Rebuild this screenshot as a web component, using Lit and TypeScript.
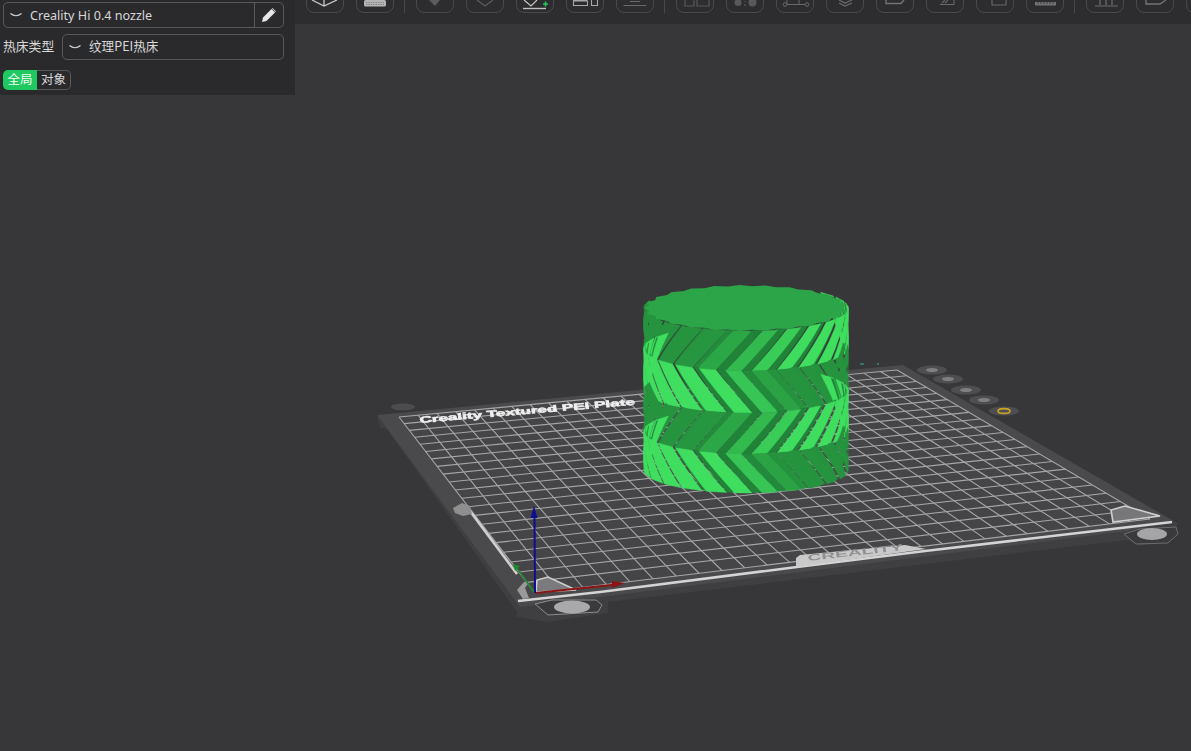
import { LitElement, css, html, svg } from 'lit';
import { customElement } from 'lit/decorators.js';

type Pt = [number, number];

const pts = (list: Pt[]) => list.map((p) => `${p[0].toFixed(1)},${p[1].toFixed(1)}`).join(' ');

// Сетка стола: перспектива из единичного квадрата в четыре угла
const corners: Pt[] = [
  [399, 417],
  [897, 370],
  [1150, 519],
  [535, 593],
];

function homography([a, b, c, d]: Pt[]) {
  const dx1 = b[0] - c[0];
  const dx2 = d[0] - c[0];
  const sx = a[0] - b[0] + c[0] - d[0];
  const dy1 = b[1] - c[1];
  const dy2 = d[1] - c[1];
  const sy = a[1] - b[1] + c[1] - d[1];
  const den = dx1 * dy2 - dx2 * dy1;
  const g = (sx * dy2 - dx2 * sy) / den;
  const h = (dx1 * sy - sx * dy1) / den;
  return (u: number, v: number): Pt => {
    const w = g * u + h * v + 1;
    return [
      ((b[0] - a[0] + g * b[0]) * u + (d[0] - a[0] + h * d[0]) * v + a[0]) / w,
      ((b[1] - a[1] + g * b[1]) * u + (d[1] - a[1] + h * d[1]) * v + a[1]) / w,
    ];
  };
}

const bedMap = homography(corners);
const COLS = 28;
const ROWS = 21;

function gridLines() {
  const out = [];
  for (let i = 0; i <= COLS; i++) {
    const p = bedMap(i / COLS, 0);
    const q = bedMap(i / COLS, 1);
    out.push(svg`<line class="grid" x1=${p[0]} y1=${p[1]} x2=${q[0]} y2=${q[1]}></line>`);
  }
  for (let i = 0; i <= ROWS; i++) {
    const p = bedMap(0, i / ROWS);
    const q = bedMap(1, i / ROWS);
    out.push(svg`<line class="grid" x1=${p[0]} y1=${p[1]} x2=${q[0]} y2=${q[1]}></line>`);
  }
  return out;
}

// Цилиндр: четыре полосы косых зубьев, стыкуются ёлочкой
const CX = 746;
const R = 102.5;
const RY = 23;
const TEETH = 25;
const TWIST = 0.36;
const SEGMENTS = 4;
const LEVELS = [308, 348, 390, 431, 470];

function shade(t: number) {
  const mix = (a: number, b: number) => Math.round(a + (b - a) * Math.min(1, Math.max(0, t)));
  return `rgb(${mix(30, 63)},${mix(125, 222)},${mix(53, 95)})`;
}

const ramp = (x: number, a: number, b: number) => Math.min(1, Math.max(0, (x - a) / (b - a)));

function bandFacets(band: number) {
  const top = LEVELS[band];
  const bottom = LEVELS[band + 1];
  const rising = band % 2 === 0;
  const twist = rising ? TWIST : -TWIST;
  const offset = rising ? 0 : TWIST;
  const step = (Math.PI * 2) / TEETH;
  const facets: { z: number; points: Pt[]; fill: string }[] = [];
  const at = (a: number, r: number, y: number): Pt => [CX + r * Math.cos(a), y + (RY * Math.sin(a) * r) / R];

  for (let i = 0; i < TEETH; i++) {
    const a0 = i * step + offset;
    const t = (Math.cos(a0 + step / 2 + twist / 2) + 1) / 2;
    // ширина канавки и яркость зависят от стороны цилиндра
    const groove = rising
      ? 0.14 + 0.26 * ramp(t, 0.3, 0.5) - 0.2 * ramp(t, 0.78, 0.95)
      : 0.1 + 0.28 * ramp(t, 0.2, 0.45);
    const landLevel = rising ? 0.24 + 0.76 * ramp(t, 0.25, 0.75) : 0.24 + 0.76 * (1 - ramp(t, 0.42, 0.68));
    const grooveLevel = rising ? 0.2 - 0.14 * ramp(t, 0.3, 0.5) : 0.06 + 0.16 * ramp(t, 0.55, 0.72);
    const split = a0 + step * (1 - groove);
    const parts: [number, number, number, number][] = [
      [a0, split, R, landLevel],
      [split, a0 + step, R - 2.5, grooveLevel],
    ];
    for (const [from, to, r, level] of parts) {
      const mid = (from + to) / 2;
      if (Math.sin(mid) < -0.3 && Math.sin(mid + twist) < -0.3) continue;
      const points: Pt[] = [];
      for (let k = 0; k <= SEGMENTS; k++) {
        const f = k / SEGMENTS;
        points.push(at(to + twist * f, r, top + (bottom - top) * f));
      }
      for (let k = SEGMENTS; k >= 0; k--) {
        const f = k / SEGMENTS;
        points.push(at(from + twist * f, r, top + (bottom - top) * f));
      }
      facets.push({ z: Math.sin(mid + twist / 2), fill: shade(level), points });
    }
  }
  return facets.sort((a, b) => a.z - b.z);
}

function cylinder() {
  const out = [];
  for (let band = 0; band < 4; band++) {
    for (const f of bandFacets(band)) {
      out.push(svg`<polygon points=${pts(f.points)} fill=${f.fill} stroke=${f.fill} stroke-width="0.4"></polygon>`);
    }
  }
  const cap: Pt[] = [];
  for (let i = 0; i < 50; i++) {
    const a = (i / 50) * Math.PI * 2;
    const r = i % 2 ? R : R - 5;
    cap.push([CX + r * Math.cos(a), LEVELS[0] + (RY * Math.sin(a) * r) / R]);
  }
  out.push(svg`<polygon points=${pts(cap)} fill="#2ca549"></polygon>`);
  return out;
}

const plateDots: Pt[] = [
  [932, 370],
  [948, 379],
  [966, 390],
  [984, 400],
];

const scene = svg`
  <polygon fill="#3f3f41" points="380,428 377,415 517,612 517,617 547,622 608,613 608,602 1127,540 1140,546 1172,540 1178,523 1172,520"></polygon>
  <polygon fill="#4a4a4c" points="377,415 903,365 1172,520 1128,531 608,596 520,607"></polygon>
  <polygon fill="#454548" points=${pts(corners)}></polygon>
  ${gridLines()}

  <ellipse cx="403" cy="407" rx="12" ry="3.5" fill="#4c4c4e"></ellipse>
  ${plateDots.map(
    (p) => svg`
      <ellipse cx=${p[0]} cy=${p[1]} rx="15" ry="4.5" fill="#4e4e50"></ellipse>
      <ellipse cx=${p[0]} cy=${p[1]} rx="6" ry="2" fill="#7f7f81"></ellipse>
    `,
  )}
  <ellipse cx="1004" cy="411" rx="15" ry="4.5" fill="#4e4e50"></ellipse>
  <ellipse cx="1004" cy="411" rx="6" ry="2.4" fill="none" stroke="#c7a428" stroke-width="1.6"></ellipse>
  <path d="M860 364h4M877 364h2" stroke="#2fb39a" stroke-width="1"></path>

  <text
    class="plate-name"
    transform="matrix(0.996 -0.085 0.1 0.75 420 423)"
    textLength="216"
    lengthAdjust="spacingAndGlyphs"
  >Creality Textured PEI Plate</text>

  <path d="M518 601 L600 592 L797 567 L925 551 L1172 522" stroke="#d4d4d4" stroke-width="2.6" fill="none"></path>
  <path d="M470 511 L517 574" stroke="#cfcfcf" stroke-width="2.6" fill="none"></path>
  <path d="M453 508l9-5 8 3 2 8-9 2-8-3z" fill="#8f8f8f"></path>
  <polygon fill="#c9c9c9" points="796,558 800,555 905,545 926,549 796,567"></polygon>
  <text class="plate-brand" transform="matrix(0.993 -0.115 0.12 0.8 808 561)" textLength="96" lengthAdjust="spacingAndGlyphs">CREALITY</text>

  <path d="M536 592 L537 580 L548 577 L576 590 Z" fill="#7b7b7d" stroke="#cfcfcf" stroke-width="1.6"></path>
  <path d="M517 590 l7-8 5 0 -4 6 4 10 -6 1z" fill="#9a9a9a"></path>
  <path d="M535 604 L552 600 L596 600 L602 605 L598 612 L548 615z" fill="#3a3a3c" stroke="#8d8d8d" stroke-width="1"></path>
  <ellipse cx="572" cy="607" rx="18" ry="6.5" fill="#a9a9ab"></ellipse>

  <path d="M1111 510 L1113 522 L1160 516 L1125 506 Z" fill="#77777a" stroke="#cfcfcf" stroke-width="1.6"></path>
  <path d="M1124 534 L1140 529 L1176 527 L1178 534 L1168 543 L1136 544z" fill="#3a3a3c" stroke="#6d6d6f" stroke-width="1"></path>
  <ellipse cx="1152" cy="534" rx="15" ry="6" fill="#a5a5a7"></ellipse>

  <line x1="535" y1="593" x2="516" y2="567" stroke="#1e8a2e" stroke-width="1.6"></line>
  <polygon points="513,564 520,566 515,571" fill="#1e8a2e"></polygon>
  <line x1="535" y1="593" x2="612" y2="585" stroke="#8c1414" stroke-width="1.8"></line>
  <polygon points="625,583 612,581 612,588" fill="#8c1414"></polygon>
  <line x1="535" y1="593" x2="534.5" y2="516" stroke="#0e0e8e" stroke-width="2"></line>
  <polygon points="534,506 530.5,518 537.5,518" fill="#0e0e8e"></polygon>

  ${cylinder()}
`;

// Значки панели: сверху срезаны краем окна
const icons = [
  svg`<path d="M6 0l12 6L31 0M18 0v6" stroke="#c8c8c8" fill="none" stroke-width="1.3"></path>`,
  svg`<rect x="8" y="0" width="22" height="6.5" rx="1.5" fill="#b5b5b5"></rect><path d="M10 2.5h18M10 4.500h18" stroke="#77777a" stroke-width=".8" stroke-dasharray="1.4 1"></path>`,
  svg`<path d="M13 0h11l-5 6z" fill="#5c5c5e"></path>`,
  svg`<path d="M11 0l8 6 8-6" stroke="#5c5c5e" fill="none" stroke-width="1.3"></path>`,
  svg`<path d="M8 0l7 6 6-6" stroke="#c8c8c8" fill="none" stroke-width="1.2"></path><path d="M7 8.5h23" stroke="#bdbdbd" stroke-width="1.4"></path><path d="M27 4h5M29.5 1.5v5" stroke="#22c55e" stroke-width="1.6"></path>`,
  svg`<path d="M7.5 1h14v4.5h-14zM7 .5h14M25.5 0v5.5h6V0" stroke="#a8a8a8" fill="none" stroke-width="1.1"></path>`,
  svg`<path d="M7.5 5.5h23M14 1.5h10" stroke="#6a6a6c" fill="none" stroke-width="1.1"></path>`,
  svg`<path d="M9 0v6h9V0M21 0v6h12V0" stroke="#59595b" fill="none" stroke-width="1.2"></path>`,
  svg`<circle cx="12" cy="2.5" r="3.5" fill="#59595b"></circle><circle cx="26.5" cy="2.5" r="4" fill="#59595b"></circle><path d="M19 1v1M19 4v2" stroke="#59595b" stroke-width="1.2"></path>`,
  svg`<circle cx="9" cy="4.5" r="1.8" fill="none" stroke="#69696b"></circle><circle cx="31" cy="4.5" r="1.8" fill="none" stroke="#69696b"></circle><path d="M11 4.5h18M11 0v4M23 0v4" stroke="#69696b" fill="none"></path>`,
  svg`<path d="M13 0l6 3 7-3M13 3l6 3 7-3" stroke="#6a6a6c" fill="none" stroke-width="1.2"></path>`,
  svg`<path d="M10 0v3.5h15l3-3.5" stroke="#727274" fill="none" stroke-width="1.4"></path>`,
  svg`<path d="M14 4.500h14M19 0l-3 3M28 0v4.500M22 0l-3 3" stroke="#69696b" fill="none" stroke-width="1.1"></path>`,
  svg`<path d="M16 0v5h14V0" stroke="#69696b" fill="none" stroke-width="1.1"></path>`,
  svg`<path d="M9 2h21v3.5H9z" fill="#727274"></path><path d="M12 2v2M15 2v2M18 2v2M21 2v2M24 2v2M27 2v2" stroke="#333" stroke-width=".8"></path>`,
  svg`<path d="M9 6h23M14 0v5M20 0v5M26 0v5" stroke="#6f6f71" fill="none" stroke-width="1.2"></path>`,
  svg`<path d="M10 0v4h14l6-4" stroke="#727274" fill="none" stroke-width="1.4"></path>`,
  svg``,
];

// После этих кнопок стоит разделитель
const separatorsAfter = new Set([1, 6, 14]);

@customElement('app-root')
export class AppRoot extends LitElement {
  static styles = css`
    :host {
      display: block;
      width: 100vw;
      height: 100vh;
      overflow: hidden;
      background: #37373a;
      color: #d8d8d8;
      font-family: 'Noto Sans', 'Noto Sans CJK SC', sans-serif;
      font-size: 12.6px;
    }

    .stage {
      display: grid;
      grid-template-columns: minmax(0, 1fr);
      grid-template-rows: minmax(0, 1fr);
      width: 100%;
      height: 100%;
    }

    .stage > * {
      grid-area: 1 / 1;
    }

    .scene {
      display: block;
      width: 100%;
      height: 100%;
      filter: blur(0.35px);
    }

    .grid {
      stroke: #a6a6a8;
      stroke-width: 1.1;
    }

    .plate-name {
      font-family: 'Liberation Sans', sans-serif;
      font-size: 12px;
      font-weight: 700;
      fill: #efefef;
      stroke: #efefef;
      stroke-width: 0.7;
    }

    .plate-brand {
      font-family: 'Liberation Sans', sans-serif;
      font-size: 11px;
      font-weight: 700;
      fill: #909092;
    }

    .chrome {
      display: flex;
      align-items: flex-start;
      min-width: 0;
    }

    .panel {
      flex: none;
      box-sizing: border-box;
      width: 295px;
      height: 95px;
      padding: 2px 11px 0 3px;
      background: #2a2a2c;
      display: flex;
      flex-direction: column;
    }

    .combo {
      box-sizing: border-box;
      height: 26px;
      border: 1px solid #59595b;
      border-radius: 5px;
      display: flex;
      align-items: center;
      min-width: 0;
      flex: 1;
    }

    .combo svg.chev {
      flex: none;
      width: 12px;
      height: 5px;
      margin: 0 8px 0 6px;
    }

    .combo .value {
      flex: 1;
      white-space: nowrap;
    }

    .combo .edit {
      flex: none;
      width: 28px;
      height: 100%;
      border-left: 1px solid #59595b;
      display: flex;
      align-items: center;
      justify-content: center;
    }

    .row {
      display: flex;
      align-items: center;
      height: 26px;
    }

    .row + .row {
      margin-top: 6px;
    }

    .cjk {
      font-family: 'Noto Sans CJK SC', 'Noto Sans', sans-serif;
      line-height: 1;
      margin-top: -2px;
    }

    .row .label {
      flex: none;
      width: 59px;
      font-size: 12.8px;
      white-space: nowrap;
    }

    .tabs {
      display: flex;
      width: max-content;
      margin-top: 10px;
      height: 20px;
      font-family: 'Noto Sans CJK SC', sans-serif;
      font-size: 12.5px;
    }

    .tab {
      box-sizing: border-box;
      width: 34px;
      text-align: center;
      border: 1px solid #59595b;
      border-left: none;
      border-radius: 0 5px 5px 0;
      line-height: 15px;
    }

    .tab--active {
      background: #1fc962;
      color: #f2fff6;
      border: none;
      border-radius: 5px 0 0 5px;
      line-height: 17px;
    }

    .toolbar {
      flex: 1;
      min-width: 0;
      box-sizing: border-box;
      height: 24px;
      padding: 0 0 11px 11px;
      background: #2d2d2f;
      display: flex;
      align-items: flex-end;
      gap: 12px;
      overflow: hidden;
    }

    .tool {
      flex: none;
      box-sizing: border-box;
      width: 38px;
      height: 30px;
      border: 1px solid #4a4a4c;
      border-radius: 8px;
      display: flex;
      align-items: flex-end;
    }

    .tool svg {
      display: block;
      width: 36px;
      height: 12px;
    }

    .sep {
      flex: none;
      width: 1px;
      height: 13px;
      margin: 0 -1px 0 -2px;
      background: #48484a;
    }
  `;

  render() {
    return html`
      <div class="stage">
        <svg class="scene" viewBox="0 0 1191 751">${scene}</svg>
        <div class="chrome">
          <div class="panel">
            <div class="row">
              <div class="combo">
                ${this.chevron()}
                <span class="value">Creality Hi 0.4 nozzle</span>
                <span class="edit">
                  <svg width="16" height="16" viewBox="0 0 16 16">
                    <path d="M1 15l1-4.500L10.500 2l3.500 3.500L5.500 14z" fill="#e6e6e6"></path>
                    <path d="M11.500 1l3.500 3.500-.6.6-3.500-3.500z" fill="#e6e6e6"></path>
                  </svg>
                </span>
              </div>
            </div>
            <div class="row">
              <span class="label cjk">热床类型</span>
              <div class="combo">
                ${this.chevron()}
                <span class="value cjk">纹理PEI热床</span>
              </div>
            </div>
            <div class="tabs">
              <div class="tab tab--active">全局</div>
              <div class="tab">对象</div>
            </div>
          </div>
          <div class="toolbar">
            ${icons.map(
              (icon, i) => html`
                <div class="tool"><svg viewBox="1 0 36 12">${icon}</svg></div>
                ${separatorsAfter.has(i) ? html`<div class="sep"></div>` : ''}
              `,
            )}
          </div>
        </div>
      </div>
    `;
  }

  private chevron() {
    return html`<svg class="chev" viewBox="0 0 12 5">
      <path d="M.5 .5Q6 5 11.500 .5" fill="none" stroke="#d8d8d8" stroke-width="1.200"></path>
    </svg>`;
  }
}
